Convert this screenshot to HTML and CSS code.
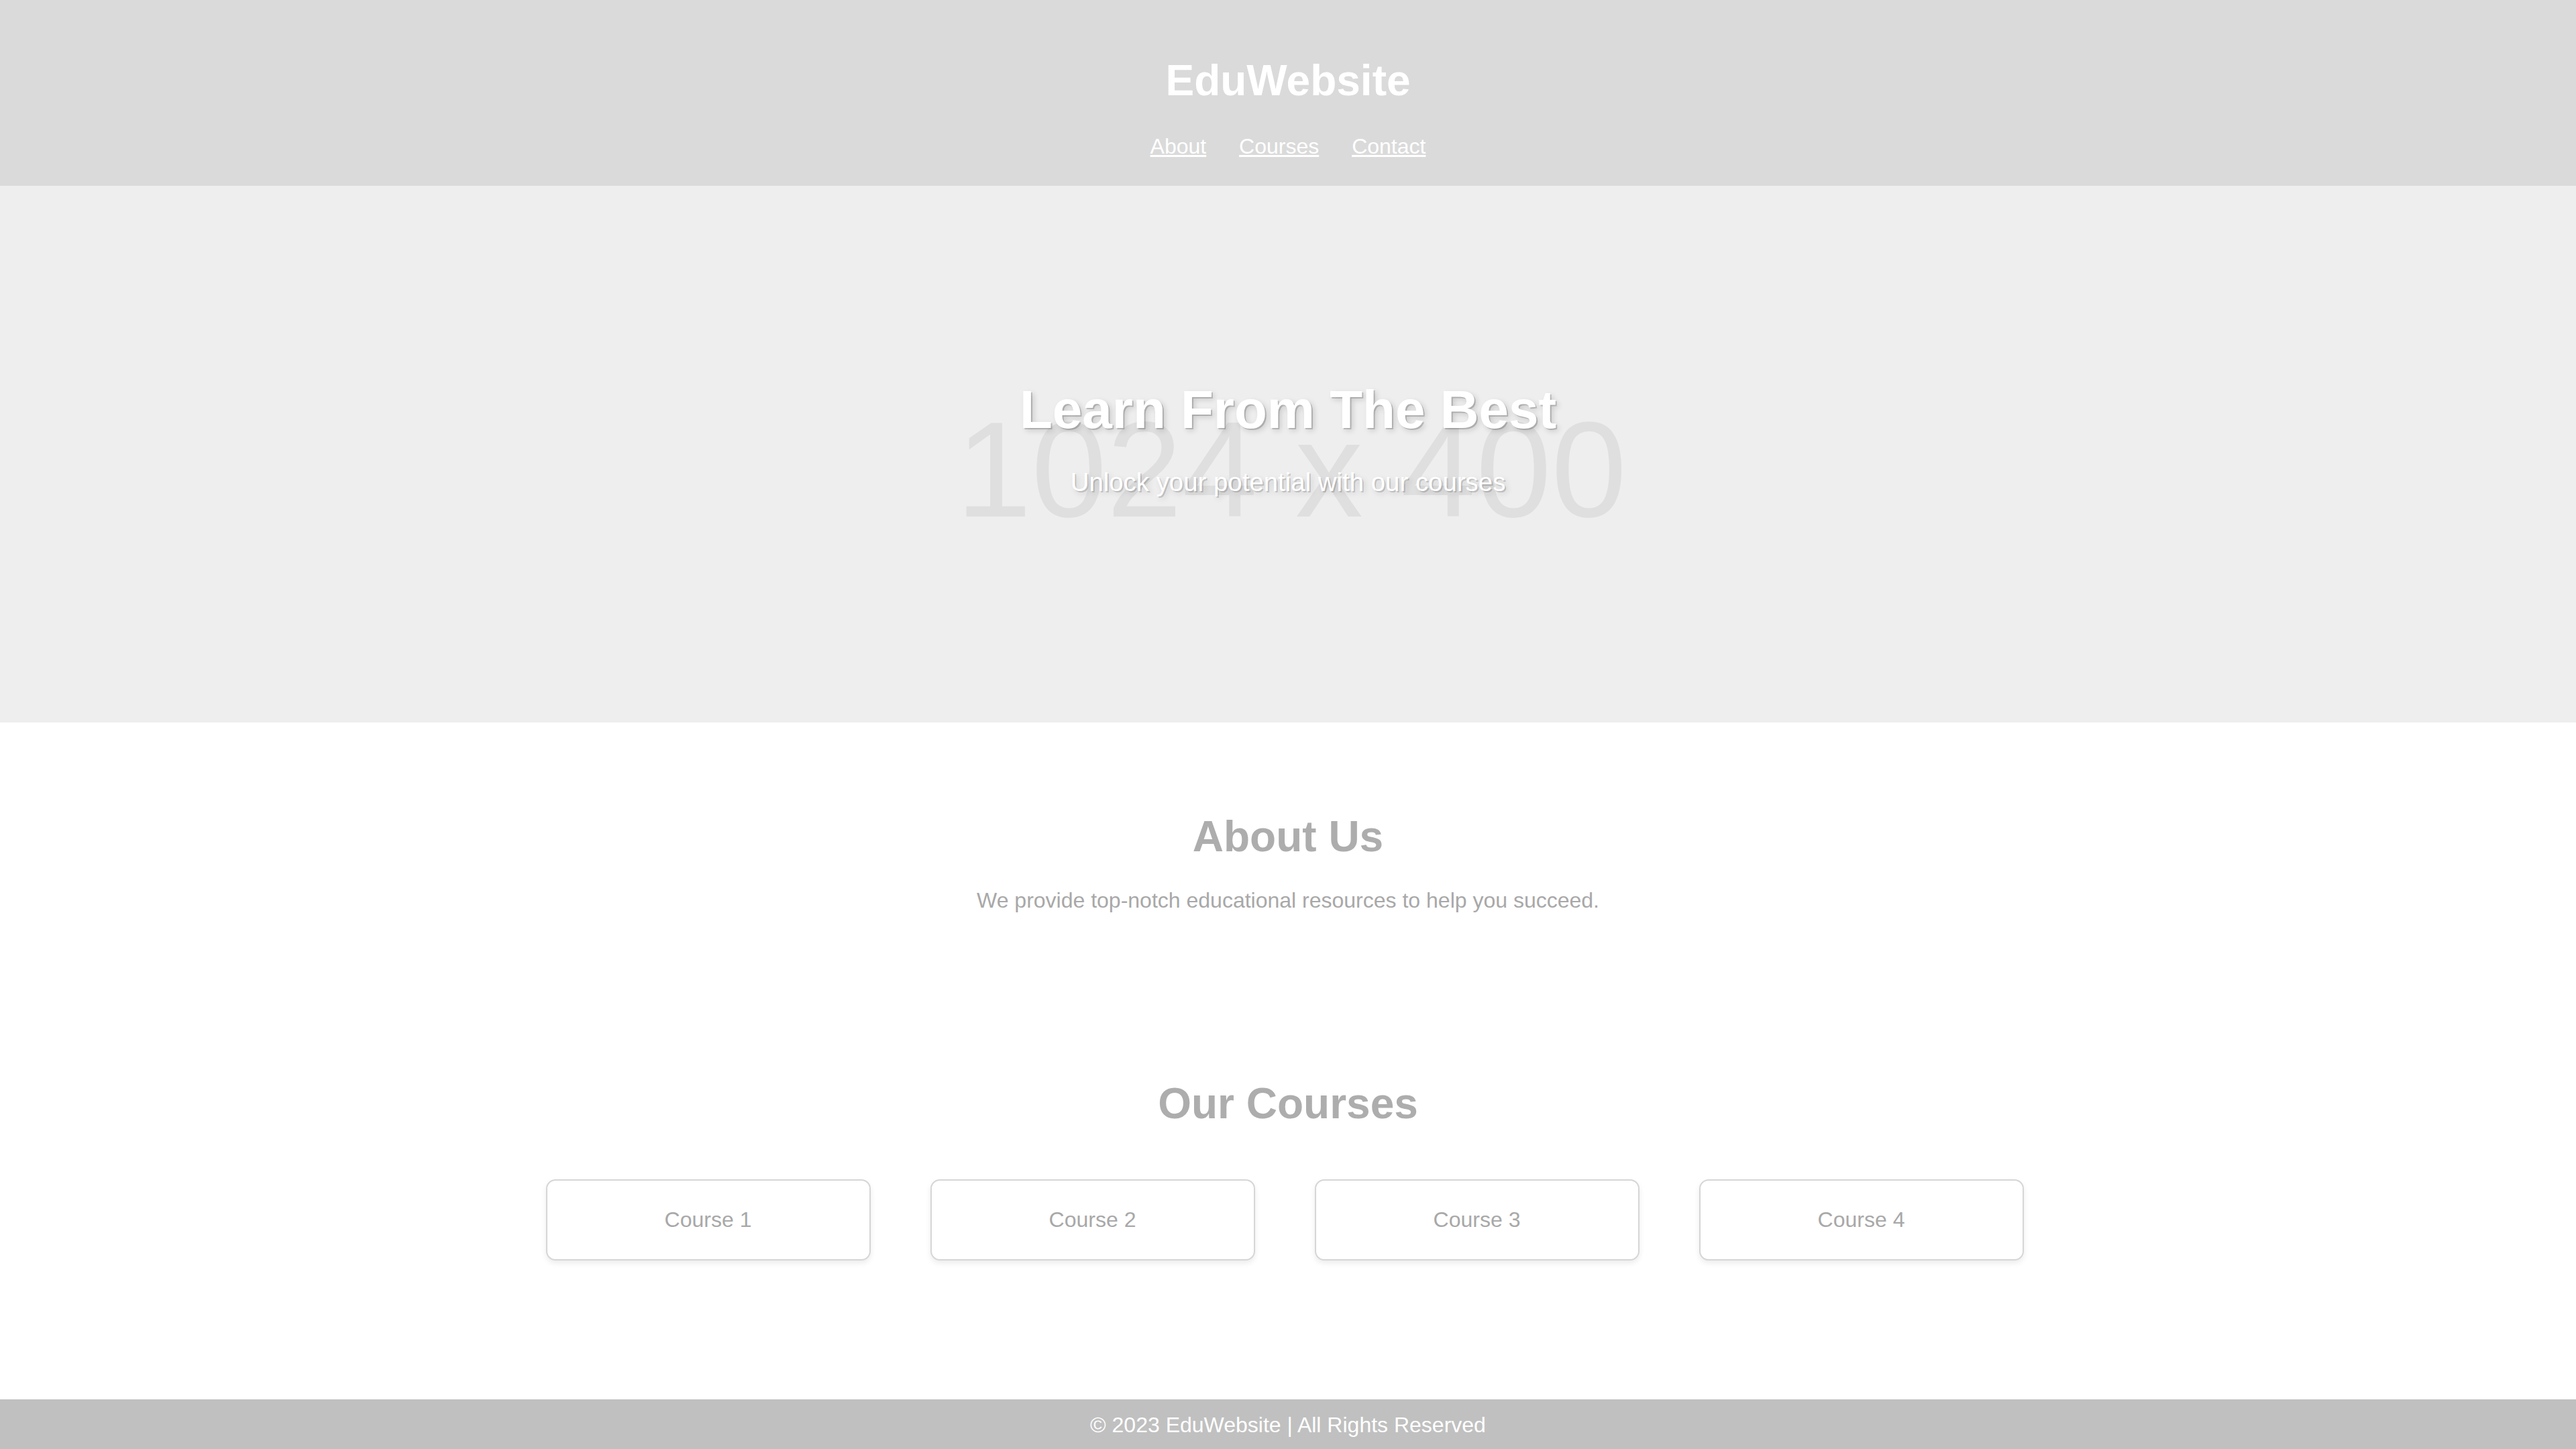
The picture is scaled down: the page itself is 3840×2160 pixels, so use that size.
FILE: index.html
```html
<!DOCTYPE html>
<html lang="en">
<head>
  <meta charset="UTF-8" />
  <title>EduWebsite</title>
  <meta name="viewport" content="width=device-width, initial-scale=1.0"/>
  <link rel="stylesheet" href="styles.css">
</head>
<body>

<header class="site-header">
  <h1>EduWebsite</h1>
  <nav class="main-nav">
    <a href="#about">About</a>
    <a href="#courses">Courses</a>
    <a href="#contact">Contact</a>
  </nav>
</header>

<section class="hero">
  <span class="hero-placeholder">1024 x 400</span>
  <h1>Learn From The Best</h1>
  <p>Unlock your potential with our courses</p>
</section>

<section class="about" id="about">
  <h2>About Us</h2>
  <p>We provide top-notch educational resources to help you succeed.</p>
</section>

<section class="courses" id="courses">
  <h2>Our Courses</h2>
  <div class="course-list">
    <div class="course">Course 1</div>
    <div class="course">Course 2</div>
    <div class="course">Course 3</div>
    <div class="course">Course 4</div>
  </div>
</section>

<footer class="site-footer" id="contact">
  <p>&copy; 2023 EduWebsite | All Rights Reserved</p>
</footer>

</body>
</html>
```

FILE: styles.css
```css
body {
  font-family: 'Liberation Sans', Arial, sans-serif;
  margin: 0;
  background: #fff;
  color: #a8a8a8;
  font-size: 32px;
}

.site-header {
  background: #dadada;
  color: #fff;
  text-align: center;
  padding: 40px;
}

.site-header h1 {
  font-size: 64px;
  margin: 43px 0;
}

.main-nav a {
  color: #fff;
  margin: 0 20px;
}

.hero {
  position: relative;
  height: 800px;
  background: #eeeeee;
  color: #fff;
  display: flex;
  flex-direction: column;
  justify-content: center;
  align-items: center;
  overflow: hidden;
}

/* stand-in for the 1024x400 placeholder picture */
.hero-placeholder {
  position: absolute;
  top: 322px;
  left: 10px;
  right: 0;
  text-align: center;
  font-family: 'Liberation Sans', Arial, sans-serif;
  font-size: 202px;
  line-height: 202px;
  color: #dfdfdf;
}

.hero h1 {
  position: relative;
  font-size: 80px;
  margin: 0 0 40px;
  text-shadow: 2px 2px 0 rgba(0,0,0,0.18), 4px 4px 8px rgba(0,0,0,0.15);
}

.hero p {
  position: relative;
  font-size: 38.4px;
  margin: 0 0 48px;
  text-shadow: 2px 2px 0 rgba(0,0,0,0.18), 4px 4px 8px rgba(0,0,0,0.15);
}

.about, .courses {
  text-align: center;
  padding: 80px 40px;
}

h2 {
  font-size: 64px;
  color: #adadad;
  margin: 53px 0 40px;
}

.about p {
  margin: 0 0 34px;
}

.courses {
  padding-bottom: 167px;
}

.course-list {
  display: flex;
  justify-content: center;
  gap: 89px;
  padding: 36px 10px 0 0;
  margin: 40px 0;
}

.course {
  width: 400px;
  padding: 40px;
  background: #fff;
  border: 2px solid #d6d6d6;
  border-radius: 14px;
  box-shadow: 0 4px 8px rgba(0,0,0,0.08);
}

.site-footer {
  background: #c0c0c0;
  color: #fff;
  text-align: center;
  padding: 20px;
}

.site-footer p {
  margin: 0;
}
```
